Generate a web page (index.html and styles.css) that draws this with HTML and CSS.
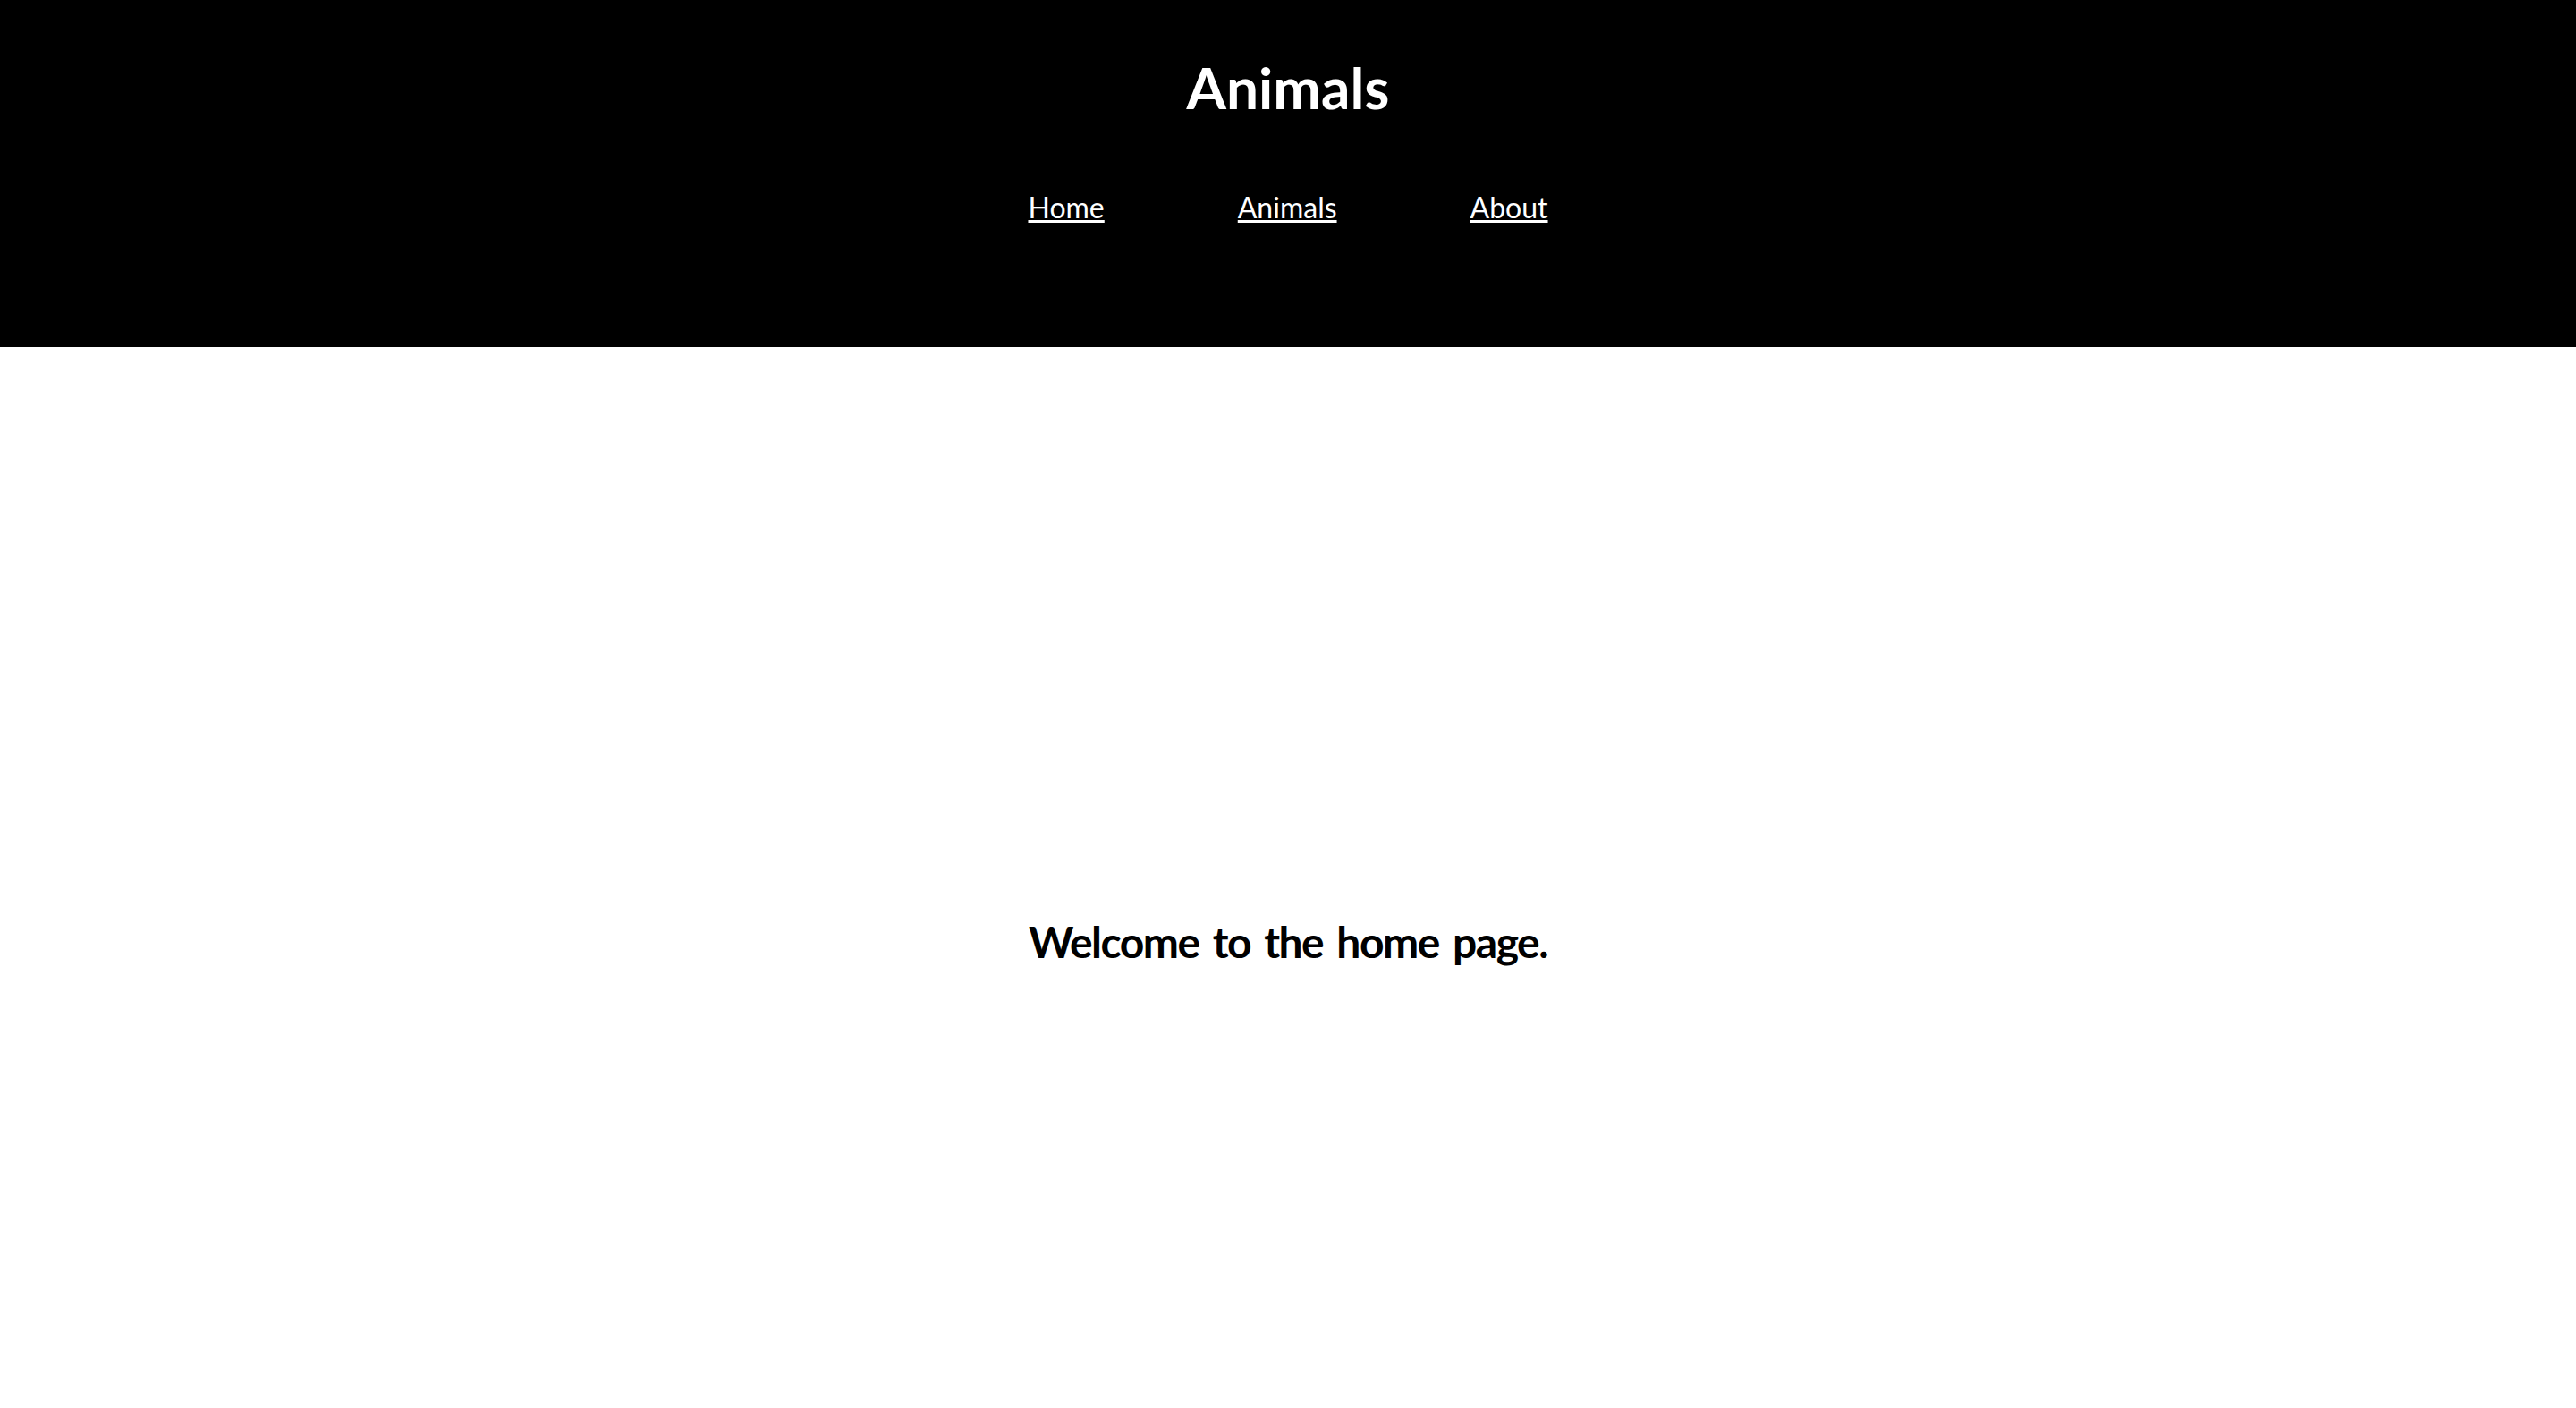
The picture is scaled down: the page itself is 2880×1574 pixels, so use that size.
FILE: index.html
```html
<!DOCTYPE html>
<html lang="en">
<head>
<meta charset="utf-8">
<title>Animals</title>
<link rel="stylesheet" href="styles.css">
</head>
<body>
<header class="site-header">
  <h1 class="site-title">Animals</h1>
  <nav class="site-nav">
    <a href="#" class="nav-link">Home</a>
    <a href="#" class="nav-link">Animals</a>
    <a href="#" class="nav-link">About</a>
  </nav>
</header>
<main class="content">
  <h2 class="welcome">Welcome to the home page.</h2>
</main>
</body>
</html>
```
FILE: styles.css
```css
html, body {
  margin: 0;
  padding: 0;
}
body {
  font-family: Lato, "Open Sans", sans-serif;
  background: #ffffff;
  color: #000000;
  min-height: 1574px;
}
.site-header {
  background: #000000;
  color: #ffffff;
  height: 388px;
  box-sizing: border-box;
  padding-top: 60px;
  display: flex;
  flex-direction: column;
  align-items: center;
}
.site-title {
  margin: 0;
  font-size: 64px;
  font-weight: 700;
  line-height: 1.2;
}
.site-nav {
  margin-top: 76px;
  display: flex;
  gap: 149px;
}
.nav-link {
  color: #ffffff;
  font-size: 32px;
  line-height: 1.2;
  text-decoration: underline;
}
.content {
  display: flex;
  justify-content: center;
  padding-top: 636px;
}
.welcome {
  margin: 0;
  font-size: 48px;
  font-weight: 700;
  line-height: 1.2;
  letter-spacing: -1.5px;
  word-spacing: 5px;
}
```
